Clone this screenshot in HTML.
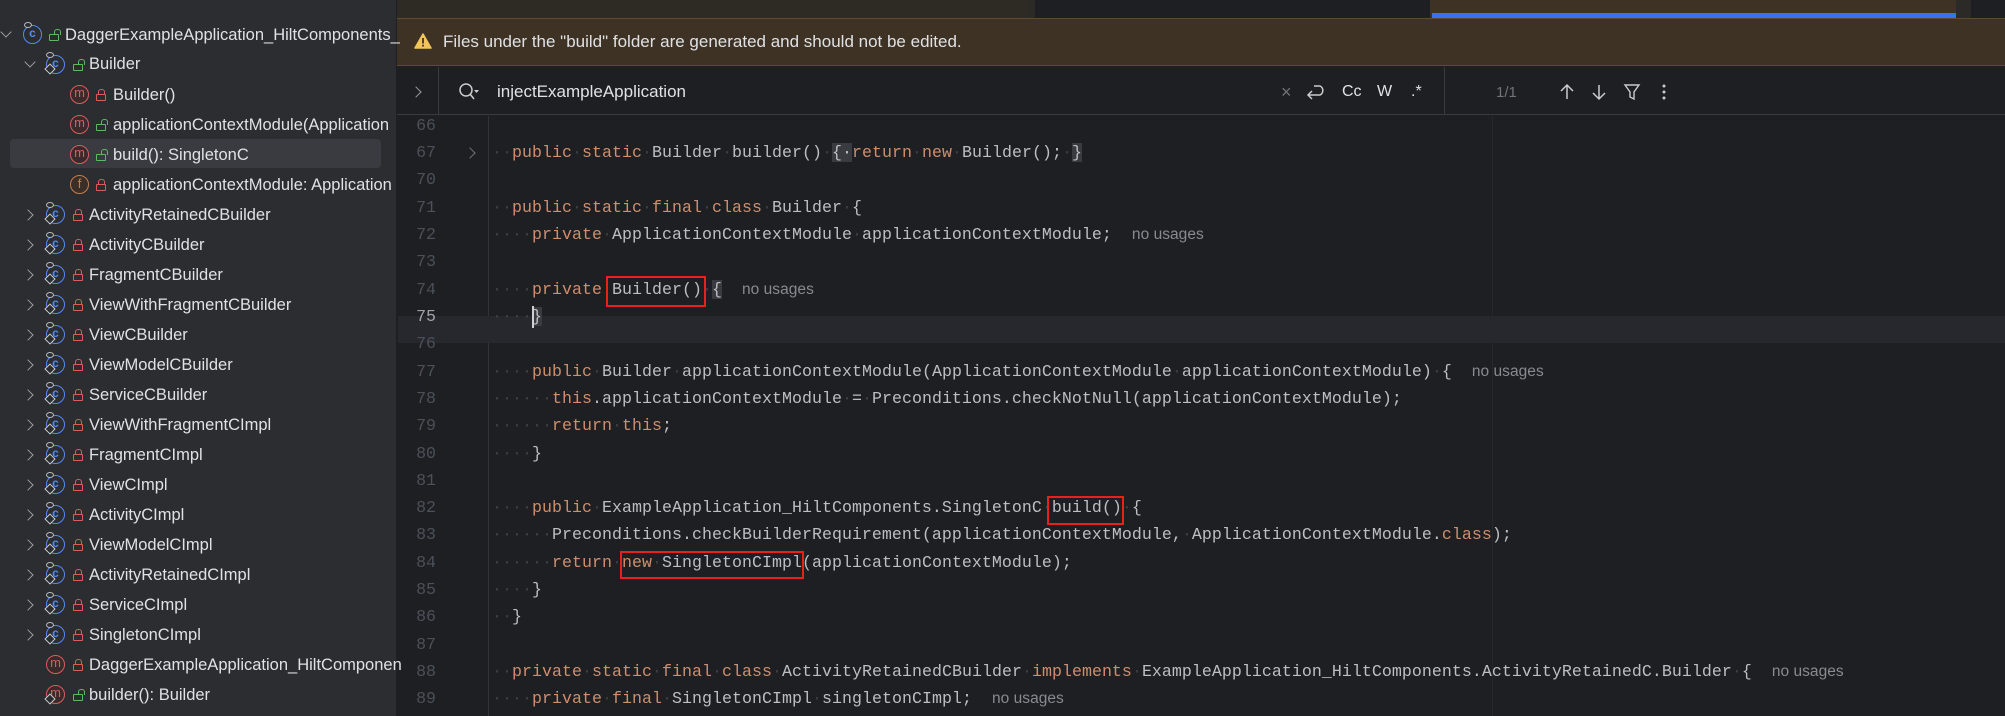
<!DOCTYPE html>
<html><head><meta charset="utf-8"><style>
*{margin:0;padding:0;box-sizing:border-box}
body{width:2005px;height:716px;overflow:hidden;background:#1e1f22;position:relative;font-family:"Liberation Sans",sans-serif}
.abs{position:absolute}
#left{left:0;top:0;width:397px;height:716px;background:#2b2d30;border-right:1px solid #1e1f22}
.row{position:absolute;height:30px;line-height:30px;font-size:16.5px;color:#dfe1e5;white-space:nowrap}
.chev{position:absolute;width:8px;height:8px;border-right:1.6px solid #9a9ca3;border-bottom:1.6px solid #9a9ca3}
.cls{position:absolute;width:19px;height:19px;border-radius:50%;border:1.8px solid #548af7;color:#548af7;font-size:12px;line-height:15px;text-align:center;font-weight:bold}
.m{position:absolute;width:19px;height:19px;border-radius:50%;border:1.8px solid #db5c5c;color:#db5c5c;font-size:13px;line-height:14px;text-align:center;background:#3a2a2c}
.f{position:absolute;width:19px;height:19px;border-radius:50%;border:1.8px solid #c77d4a;color:#c77d4a;font-size:13px;line-height:15px;text-align:center;background:#3a2f28}
.lk{position:absolute;width:10px;height:7px;border:1.6px solid #db5c5c;border-radius:1px;margin-top:-3px}
.lk:before{content:"";position:absolute;left:1px;top:-6px;width:5px;height:5px;border:1.6px solid #db5c5c;border-bottom:none;border-radius:3px 3px 0 0}
.lk.g{border-color:#5fb865}.lk.g:before{border-color:#5fb865;left:4px}
.dia{position:absolute;width:8px;height:8px;border:1.4px solid #ccc;background:#2b2d30;transform:rotate(45deg)}
.ring{position:absolute;width:8px;height:6px;border:1.3px solid #bbb;border-radius:50%;background:#2b2d30}
#code{position:absolute;left:0;top:0;font-family:"Liberation Mono",monospace;font-size:16.6px;color:#bcbec4}
.ln{position:absolute;left:398px;width:38px;text-align:right;font-family:"Liberation Mono",monospace;font-size:16.6px;color:#4b5059;height:27px;line-height:27px}
.cl{position:absolute;left:492px;height:27px;line-height:27px;white-space:pre;letter-spacing:0.04px}
.k{color:#cf8e6d}.d{color:#3b3e43}
.nu{font-family:"Liberation Sans",sans-serif;color:#868a91;font-size:15.5px}
.hb{background:#393b40}
.red{position:absolute;border:2px solid #e8211b}
</style></head><body>

<div class="abs" style="left:397px;top:0;width:1608px;height:18px;background:#2b2a27"></div>
<div class="abs" style="left:397px;top:0;width:630px;height:18px;background:#2e2a24"></div>
<div class="abs" style="left:1035px;top:0;width:395px;height:18px;background:#1e1f22"></div>
<div class="abs" style="left:1430px;top:0;width:526px;height:18px;background:#3d3224"></div>
<div class="abs" style="left:1432px;top:13px;width:524px;height:5px;background:#3574f0"></div>
<div class="abs" style="left:1971px;top:0;width:34px;height:18px;background:#1e1f22"></div>

<div class="abs" style="left:397px;top:18px;width:1608px;height:48px;background:#3d3224;border-top:1px solid #5e4b2d;border-bottom:1px solid #5e4b2d"></div>
<svg class="abs" style="left:414px;top:33px" width="18" height="16" viewBox="0 0 18 16"><path d="M9 1 L17 15 L1 15 Z" fill="#f2c55c" stroke="#f2c55c" stroke-linejoin="round" stroke-width="1.5"/><rect x="8.1" y="5" width="1.8" height="5.5" fill="#3d3224"/><rect x="8.1" y="11.7" width="1.8" height="1.8" fill="#3d3224"/></svg>
<div class="abs" style="left:443px;top:31px;font-size:17px;color:#dfe1e5;line-height:22px">Files under the "build" folder are generated and should not be edited.</div>

<div class="abs" style="left:397px;top:67px;width:1608px;height:48px;background:#1e1f22;border-bottom:1px solid #393b40"></div>
<div class="abs" style="left:438px;top:67px;width:1px;height:48px;background:#393b40"></div>
<div class="abs" style="left:1444px;top:67px;width:1px;height:48px;background:#393b40"></div>
<div class="chev" style="left:412px;top:88px;transform:rotate(-45deg)"></div>
<svg class="abs" style="left:458px;top:82px" width="22" height="20" viewBox="0 0 22 20"><circle cx="8" cy="8" r="6" fill="none" stroke="#ccc" stroke-width="1.5"/><path d="M12 12 L16 17" stroke="#ccc" stroke-width="1.6"/><path d="M16 8 L21 8 L18.5 11 Z" fill="#ccc"/></svg>
<div class="abs" style="left:497px;top:80px;font-size:17px;color:#dfe1e5;line-height:24px">injectExampleApplication</div>
<div class="abs" style="left:1281px;top:80px;font-size:18px;color:#6f737a;line-height:24px">×</div>
<svg class="abs" style="left:1305px;top:83px" width="22" height="18" viewBox="0 0 22 18"><path d="M3 12 H15 A5 5 0 0 0 15 3 H9" fill="none" stroke="#ccc" stroke-width="1.5"/><path d="M7 8 L3 12 L7 16" fill="none" stroke="#ccc" stroke-width="1.5"/></svg>
<div class="abs" style="left:1342px;top:80px;font-size:16px;color:#dfe1e5;line-height:24px">Cc</div>
<div class="abs" style="left:1377px;top:80px;font-size:16px;color:#dfe1e5;line-height:24px">W</div>
<div class="abs" style="left:1411px;top:80px;font-size:16px;color:#dfe1e5;line-height:24px">.*</div>
<div class="abs" style="left:1496px;top:81px;font-size:15px;color:#6f737a;line-height:24px">1/1</div>
<svg class="abs" style="left:1558px;top:83px" width="120" height="18" viewBox="0 0 120 18"><path d="M9 16 V2 M3 8 L9 2 L15 8" fill="none" stroke="#ccc" stroke-width="1.5"/><path d="M41 2 V16 M35 10 L41 16 L47 10" fill="none" stroke="#ccc" stroke-width="1.5"/><path d="M67 2 H81 L76 9 V16 L72 14 V9 Z" fill="none" stroke="#ccc" stroke-width="1.4"/><circle cx="106" cy="3" r="1.5" fill="#ccc"/><circle cx="106" cy="9" r="1.5" fill="#ccc"/><circle cx="106" cy="15" r="1.5" fill="#ccc"/></svg>

<div class="abs" style="left:488px;top:116px;width:1px;height:600px;background:#313338"></div>
<div class="abs" style="left:1492px;top:116px;width:1px;height:600px;background:#26282c"></div>
<div class="abs" style="left:398px;top:316px;width:1607px;height:27px;background:#26282e"></div>
<div class="chev" style="left:466px;top:149px;transform:rotate(-45deg);border-color:#6f737a"></div>

<div id="code">
<div class="ln" style="top:112px">66</div>
<div class="ln" style="top:139px">67</div>
<div class="ln" style="top:166px">70</div>
<div class="ln" style="top:194px">71</div>
<div class="ln" style="top:221px">72</div>
<div class="ln" style="top:248px">73</div>
<div class="ln" style="top:276px">74</div>
<div class="ln" style="top:303px;color:#a1a3ab">75</div>
<div class="ln" style="top:330px">76</div>
<div class="ln" style="top:358px">77</div>
<div class="ln" style="top:385px">78</div>
<div class="ln" style="top:412px">79</div>
<div class="ln" style="top:440px">80</div>
<div class="ln" style="top:467px">81</div>
<div class="ln" style="top:494px">82</div>
<div class="ln" style="top:521px">83</div>
<div class="ln" style="top:549px">84</div>
<div class="ln" style="top:576px">85</div>
<div class="ln" style="top:603px">86</div>
<div class="ln" style="top:631px">87</div>
<div class="ln" style="top:658px">88</div>
<div class="ln" style="top:685px">89</div>

<div class="cl" style="top:139px"><span class="d">··</span><span class="k">public</span><span class="d">·</span><span class="k">static</span><span class="d">·</span>Builder<span class="d">·</span>builder()<span class="d">·</span><span class="hb">{·</span><span class="k">return</span><span class="d">·</span><span class="k">new</span><span class="d">·</span>Builder();<span class="d">·</span><span class="hb">}</span></div>
<div class="cl" style="top:194px"><span class="d">··</span><span class="k">public</span><span class="d">·</span><span class="k">static</span><span class="d">·</span><span class="k">final</span><span class="d">·</span><span class="k">class</span><span class="d">·</span>Builder<span class="d">·</span>{</div>
<div class="cl" style="top:221px"><span class="d">····</span><span class="k">private</span><span class="d">·</span>ApplicationContextModule<span class="d">·</span>applicationContextModule;  <span class="nu">no usages</span></div>
<div class="cl" style="top:276px"><span class="d">····</span><span class="k">private</span><span class="d">·</span>Builder()<span class="d">·</span><span class="hb">{</span>  <span class="nu">no usages</span></div>
<div class="cl" style="top:303px"><span class="d">····</span><span class="hb">}</span></div>
<div class="cl" style="top:358px"><span class="d">····</span><span class="k">public</span><span class="d">·</span>Builder<span class="d">·</span>applicationContextModule(ApplicationContextModule<span class="d">·</span>applicationContextModule)<span class="d">·</span>{  <span class="nu">no usages</span></div>
<div class="cl" style="top:385px"><span class="d">······</span><span class="k">this</span>.applicationContextModule<span class="d">·</span>=<span class="d">·</span>Preconditions.checkNotNull(applicationContextModule);</div>
<div class="cl" style="top:412px"><span class="d">······</span><span class="k">return</span><span class="d">·</span><span class="k">this</span>;</div>
<div class="cl" style="top:440px"><span class="d">····</span>}</div>
<div class="cl" style="top:494px"><span class="d">····</span><span class="k">public</span><span class="d">·</span>ExampleApplication_HiltComponents.SingletonC<span class="d">·</span>build()<span class="d">·</span>{</div>
<div class="cl" style="top:521px"><span class="d">······</span>Preconditions.checkBuilderRequirement(applicationContextModule,<span class="d">·</span>ApplicationContextModule.<span class="k">class</span>);</div>
<div class="cl" style="top:549px"><span class="d">······</span><span class="k">return</span><span class="d">·</span><span class="k">new</span><span class="d">·</span>SingletonCImpl(applicationContextModule);</div>
<div class="cl" style="top:576px"><span class="d">····</span>}</div>
<div class="cl" style="top:603px"><span class="d">··</span>}</div>
<div class="cl" style="top:658px"><span class="d">··</span><span class="k">private</span><span class="d">·</span><span class="k">static</span><span class="d">·</span><span class="k">final</span><span class="d">·</span><span class="k">class</span><span class="d">·</span>ActivityRetainedCBuilder<span class="d">·</span><span class="k">implements</span><span class="d">·</span>ExampleApplication_HiltComponents.ActivityRetainedC.Builder<span class="d">·</span>{  <span class="nu">no usages</span></div>
<div class="cl" style="top:685px"><span class="d">····</span><span class="k">private</span><span class="d">·</span><span class="k">final</span><span class="d">·</span>SingletonCImpl<span class="d">·</span>singletonCImpl;  <span class="nu">no usages</span></div>
</div>
<div class="abs" style="left:532px;top:306px;width:2px;height:22px;background:#ced0d6"></div>

<div class="red" style="left:606px;top:276px;width:100px;height:31px"></div>
<div class="red" style="left:1047px;top:496px;width:77px;height:29px"></div>
<div class="red" style="left:620px;top:551px;width:184px;height:28px"></div>

<div id="left" class="abs">
<div class="abs" style="left:10px;top:139px;width:371px;height:29px;background:#393b40;border-radius:4px"></div>

<div class="chev" style="left:2px;top:28px;transform:rotate(45deg)"></div>
<div class="cls" style="left:23px;top:25px">c</div><div class="ring" style="left:24px;top:22px"></div>
<div class="lk g" style="left:49px;top:37px"></div>
<div class="row" style="left:65px;top:20px">DaggerExampleApplication_HiltComponents_</div>
<div class="chev" style="left:26px;top:58px;transform:rotate(45deg)"></div>
<div class="cls" style="left:46px;top:55px">c</div><div class="ring" style="left:46px;top:52px"></div><div class="dia" style="left:46px;top:65px"></div>
<div class="lk g" style="left:73px;top:67px"></div>
<div class="row" style="left:89px;top:49px">Builder</div>

<div class="m" style="left:70px;top:85px">m</div><div class="lk" style="left:96px;top:97px"></div>
<div class="row" style="left:113px;top:80px">Builder()</div>
<div class="m" style="left:70px;top:115px">m</div><div class="lk g" style="left:96px;top:127px"></div>
<div class="row" style="left:113px;top:110px">applicationContextModule(Application</div>
<div class="m" style="left:70px;top:145px">m</div><div class="lk g" style="left:96px;top:157px"></div>
<div class="row" style="left:113px;top:140px">build(): SingletonC</div>
<div class="f" style="left:70px;top:175px">f</div><div class="lk" style="left:96px;top:187px"></div>
<div class="row" style="left:113px;top:170px">applicationContextModule: Application</div>

<div class="chev" style="left:24px;top:211px;transform:rotate(-45deg)"></div><div class="cls" style="left:46px;top:205px">c</div><div class="ring" style="left:46px;top:202px"></div><div class="dia" style="left:46px;top:215px"></div><div class="lk" style="left:73px;top:217px"></div><div class="row" style="left:89px;top:200px">ActivityRetainedCBuilder</div>
<div class="chev" style="left:24px;top:241px;transform:rotate(-45deg)"></div><div class="cls" style="left:46px;top:235px">c</div><div class="ring" style="left:46px;top:232px"></div><div class="dia" style="left:46px;top:245px"></div><div class="lk" style="left:73px;top:247px"></div><div class="row" style="left:89px;top:230px">ActivityCBuilder</div>
<div class="chev" style="left:24px;top:271px;transform:rotate(-45deg)"></div><div class="cls" style="left:46px;top:265px">c</div><div class="ring" style="left:46px;top:262px"></div><div class="dia" style="left:46px;top:275px"></div><div class="lk" style="left:73px;top:277px"></div><div class="row" style="left:89px;top:260px">FragmentCBuilder</div>
<div class="chev" style="left:24px;top:301px;transform:rotate(-45deg)"></div><div class="cls" style="left:46px;top:295px">c</div><div class="ring" style="left:46px;top:292px"></div><div class="dia" style="left:46px;top:305px"></div><div class="lk" style="left:73px;top:307px"></div><div class="row" style="left:89px;top:290px">ViewWithFragmentCBuilder</div>
<div class="chev" style="left:24px;top:331px;transform:rotate(-45deg)"></div><div class="cls" style="left:46px;top:325px">c</div><div class="ring" style="left:46px;top:322px"></div><div class="dia" style="left:46px;top:335px"></div><div class="lk" style="left:73px;top:337px"></div><div class="row" style="left:89px;top:320px">ViewCBuilder</div>
<div class="chev" style="left:24px;top:361px;transform:rotate(-45deg)"></div><div class="cls" style="left:46px;top:355px">c</div><div class="ring" style="left:46px;top:352px"></div><div class="dia" style="left:46px;top:365px"></div><div class="lk" style="left:73px;top:367px"></div><div class="row" style="left:89px;top:350px">ViewModelCBuilder</div>
<div class="chev" style="left:24px;top:391px;transform:rotate(-45deg)"></div><div class="cls" style="left:46px;top:385px">c</div><div class="ring" style="left:46px;top:382px"></div><div class="dia" style="left:46px;top:395px"></div><div class="lk" style="left:73px;top:397px"></div><div class="row" style="left:89px;top:380px">ServiceCBuilder</div>
<div class="chev" style="left:24px;top:421px;transform:rotate(-45deg)"></div><div class="cls" style="left:46px;top:415px">c</div><div class="ring" style="left:46px;top:412px"></div><div class="dia" style="left:46px;top:425px"></div><div class="lk" style="left:73px;top:427px"></div><div class="row" style="left:89px;top:410px">ViewWithFragmentCImpl</div>
<div class="chev" style="left:24px;top:451px;transform:rotate(-45deg)"></div><div class="cls" style="left:46px;top:445px">c</div><div class="ring" style="left:46px;top:442px"></div><div class="dia" style="left:46px;top:455px"></div><div class="lk" style="left:73px;top:457px"></div><div class="row" style="left:89px;top:440px">FragmentCImpl</div>
<div class="chev" style="left:24px;top:481px;transform:rotate(-45deg)"></div><div class="cls" style="left:46px;top:475px">c</div><div class="ring" style="left:46px;top:472px"></div><div class="dia" style="left:46px;top:485px"></div><div class="lk" style="left:73px;top:487px"></div><div class="row" style="left:89px;top:470px">ViewCImpl</div>
<div class="chev" style="left:24px;top:511px;transform:rotate(-45deg)"></div><div class="cls" style="left:46px;top:505px">c</div><div class="ring" style="left:46px;top:502px"></div><div class="dia" style="left:46px;top:515px"></div><div class="lk" style="left:73px;top:517px"></div><div class="row" style="left:89px;top:500px">ActivityCImpl</div>
<div class="chev" style="left:24px;top:541px;transform:rotate(-45deg)"></div><div class="cls" style="left:46px;top:535px">c</div><div class="ring" style="left:46px;top:532px"></div><div class="dia" style="left:46px;top:545px"></div><div class="lk" style="left:73px;top:547px"></div><div class="row" style="left:89px;top:530px">ViewModelCImpl</div>
<div class="chev" style="left:24px;top:571px;transform:rotate(-45deg)"></div><div class="cls" style="left:46px;top:565px">c</div><div class="ring" style="left:46px;top:562px"></div><div class="dia" style="left:46px;top:575px"></div><div class="lk" style="left:73px;top:577px"></div><div class="row" style="left:89px;top:560px">ActivityRetainedCImpl</div>
<div class="chev" style="left:24px;top:601px;transform:rotate(-45deg)"></div><div class="cls" style="left:46px;top:595px">c</div><div class="ring" style="left:46px;top:592px"></div><div class="dia" style="left:46px;top:605px"></div><div class="lk" style="left:73px;top:607px"></div><div class="row" style="left:89px;top:590px">ServiceCImpl</div>
<div class="chev" style="left:24px;top:631px;transform:rotate(-45deg)"></div><div class="cls" style="left:46px;top:625px">c</div><div class="ring" style="left:46px;top:622px"></div><div class="dia" style="left:46px;top:635px"></div><div class="lk" style="left:73px;top:637px"></div><div class="row" style="left:89px;top:620px">SingletonCImpl</div>
<div class="m" style="left:46px;top:655px">m</div><div class="lk" style="left:73px;top:667px"></div><div class="row" style="left:89px;top:650px">DaggerExampleApplication_HiltComponen</div>
<div class="m" style="left:46px;top:685px">m</div><div class="dia" style="left:46px;top:695px"></div><div class="lk g" style="left:73px;top:697px"></div><div class="row" style="left:89px;top:680px">builder(): Builder</div>
</div>
</body></html>
